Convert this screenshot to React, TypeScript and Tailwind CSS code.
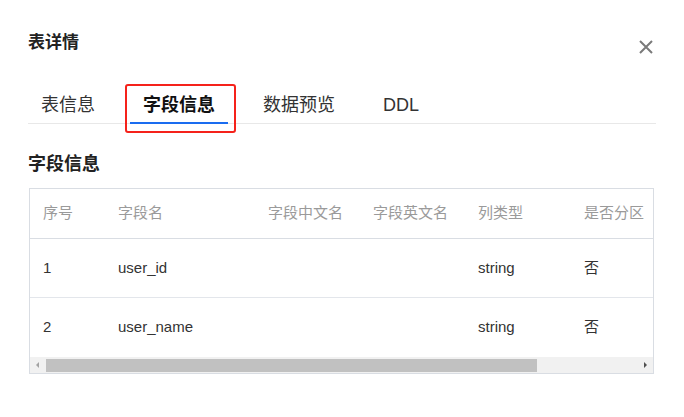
import React from 'react';

const columns = [
  { key: 'idx', title: '序号', width: 'w-[75px]' },
  { key: 'name', title: '字段名', width: 'w-[150px]' },
  { key: 'cn', title: '字段中文名', width: 'w-[105px]' },
  { key: 'en', title: '字段英文名', width: 'w-[105px]' },
  { key: 'type', title: '列类型', width: 'w-[106px]' },
  { key: 'part', title: '是否分区', width: 'w-[210px]' },
];

const rows = [
  { idx: '1', name: 'user_id', cn: '', en: '', type: 'string', part: '否' },
  { idx: '2', name: 'user_name', cn: '', en: '', type: 'string', part: '否' },
];

const tabs = ['表信息', '字段信息', '数据预览', 'DDL'];

export default function App() {
  return (
    <div className="w-[684px] h-[417px] bg-white text-[#333] font-['Liberation_Sans','Noto_Sans_CJK_SC',sans-serif] overflow-hidden">
      {/* Header */}
      <div className="flex items-start justify-between pl-[28px] pr-[30px] pt-[33px]">
        <h1 className="text-[17px] leading-[20px] font-bold text-[#222]">表详情</h1>
        <svg width="16" height="16" viewBox="0 0 16 16" className="mt-[6px]">
          <path d="M2 2 L14 14 M14 2 L2 14" stroke="#7a7a7a" strokeWidth="2" fill="none" />
        </svg>
      </div>

      {/* Tabs */}
      <div className="relative mx-[28px] mt-[39px] flex gap-[22px] border-b border-[#e8e8e8]">
        {tabs.map((t, i) => (
          <div
            key={t}
            className={
              i === 1
                ? 'px-[13px] pb-[5px] text-[18px] leading-[22px] font-bold text-[#111] border-b-2 border-[#1a6cf0] -mb-px'
                : 'px-[13px] pb-[7px] text-[18px] leading-[22px] text-[#333]'
            }
          >
            {t}
          </div>
        ))}
        {/* annotation box */}
        <div className="absolute left-[97px] top-[-10px] w-[111px] h-[49px] border-2 border-[#f5221b] rounded-[3px] pointer-events-none" />
      </div>

      {/* Section */}
      <h2 className="pl-[28px] mt-[29px] text-[18px] leading-[22px] font-bold text-[#222]">字段信息</h2>

      <div className="ml-[29px] mt-[13px] w-[625px] border border-[#d9dde3] overflow-hidden">
        <div className="w-[751px]">
          <div className="flex h-[50px] items-center border-b border-[#d9dde3] text-[15px] text-[#9a9a9a]">
            {columns.map((c) => (
              <div key={c.key} className={`${c.width} shrink-0 pl-[13px]`}>
                {c.title}
              </div>
            ))}
          </div>
          {rows.map((r, ri) => (
            <div
              key={r.idx}
              className={
                ri === 0
                  ? 'flex h-[59px] items-center border-b border-[#e3e6eb] text-[15px] text-[#333]'
                  : 'flex h-[59px] items-center text-[15px] text-[#333]'
              }
            >
              {columns.map((c) => (
                <div key={c.key} className={`${c.width} shrink-0 pl-[13px]`}>
                  {(r as Record<string, string>)[c.key]}
                </div>
              ))}
            </div>
          ))}
        </div>
        {/* Horizontal scrollbar */}
        <div className="flex h-[16px] items-center bg-[#f1f1f1]">
          <svg width="16" height="16" viewBox="0 0 16 16" className="shrink-0">
            <path d="M9 5 L6 8 L9 11 Z" fill="#a3a3a3" />
          </svg>
          <div className="h-[13px] w-[491px] bg-[#c1c1c1]" />
          <div className="flex-1" />
          <svg width="16" height="16" viewBox="0 0 16 16" className="shrink-0">
            <path d="M7 5 L10 8 L7 11 Z" fill="#505050" />
          </svg>
        </div>
      </div>
    </div>
  );
}
